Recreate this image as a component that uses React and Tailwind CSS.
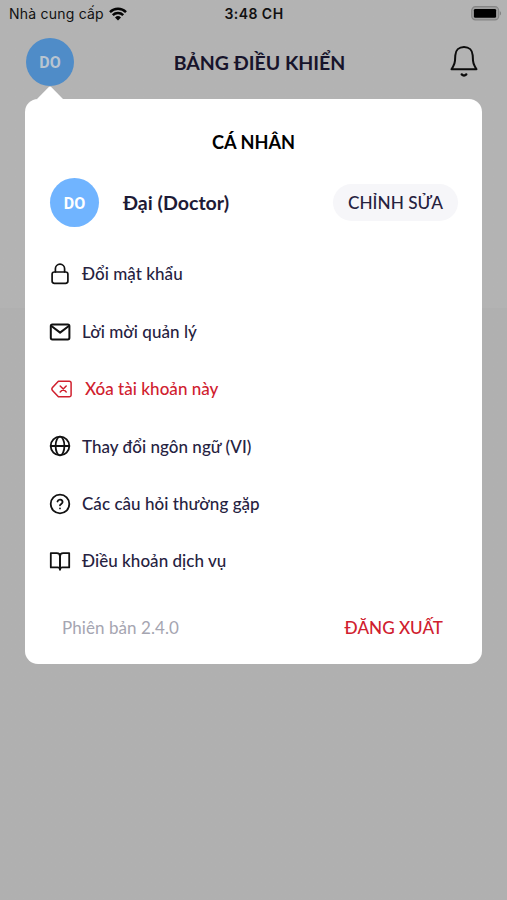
import React from 'react';

const strokeProps = {
  viewBox: '0 0 24 24',
  className: 'w-6 h-6',
  fill: 'none',
  stroke: 'currentColor',
  strokeWidth: 1.8,
  strokeLinecap: 'round',
  strokeLinejoin: 'round',
};

const LockIcon = () => (
  <svg {...strokeProps} strokeWidth="1.7">
    <rect x="4.1" y="10" width="15.8" height="11.4" rx="2.3" />
    <path d="M7.4 10V6.8a4.6 4.6 0 0 1 9.2 0V10" />
  </svg>
);

const MailIcon = () => (
  <svg {...strokeProps} strokeWidth="2">
    <rect x="2.8" y="4.4" width="18.6" height="15" rx="1.6" />
    <path d="m3.4 6 8.7 6.6L20.8 6" />
  </svg>
);

const DeleteTagIcon = () => (
  <svg viewBox="0 0 22 18" className="w-[22px] h-[18px]" fill="none" stroke="currentColor" strokeWidth="1.5" strokeLinecap="round" strokeLinejoin="round">
    <path d="M7.4 1.2H18.3a1.8 1.8 0 0 1 1.8 1.8V15a1.8 1.8 0 0 1-1.8 1.8H7.4L1.5 10.4a2.1 2.1 0 0 1 0-2.8Z" />
    <path d="m9.2 6 6 6M15.2 6l-6 6" />
  </svg>
);

const GlobeIcon = () => (
  <svg {...strokeProps}>
    <circle cx="12" cy="12" r="9.3" />
    <ellipse cx="12" cy="12" rx="4.4" ry="9.3" />
    <path d="M2.7 12h18.6" />
  </svg>
);

const HelpIcon = () => (
  <svg {...strokeProps}>
    <circle cx="12" cy="12" r="9.3" />
    <path d="M9.5 9.5a2.6 2.6 0 0 1 5.1.6c0 1.6-2.2 1.9-2.6 3.2" />
    <path d="M12 16.4v.01" />
  </svg>
);

const BookIcon = () => (
  <svg {...strokeProps}>
    <path d="M2.8 4.2h6A3.2 3.2 0 0 1 12 7.4v13.2a2.4 2.4 0 0 0-2.4-2.2H2.8Z" />
    <path d="M21.2 4.2h-6A3.2 3.2 0 0 0 12 7.4v13.2a2.4 2.4 0 0 1 2.4-2.2h6.8Z" />
  </svg>
);

const BellIcon = () => (
  <svg viewBox="0 0 30 32" className="w-[30px] h-8" fill="none" stroke="#0c0c0c" strokeWidth="2" strokeLinecap="round" strokeLinejoin="round">
    <path d="M6.3 10.4C6.5 5.3 10 2 15 2s8.5 3.3 8.7 8.4l.3 5.2c.2 2.6 1 4.4 2 6.1l1.5 2.5h-25L4 21.7c1-1.7 1.8-3.5 2-6.1Z" />
    <path d="M12.7 29.4c1.4 1.5 3.2 1.5 4.6 0" strokeWidth="2.3" />
  </svg>
);

const WifiIcon = () => (
  <svg viewBox="0 0 18 14" className="w-[18px] h-[14px]" fill="none" stroke="#050505" strokeWidth="2.5">
    <path d="M1 5.1a11.4 11.4 0 0 1 16 0" />
    <path d="M3.8 8.2a7.4 7.4 0 0 1 10.4 0" />
    <path d="M9 13.4 6 10.5a4.3 4.3 0 0 1 6 0Z" fill="#050505" stroke="none" />
  </svg>
);

const BatteryIcon = () => (
  <svg viewBox="0 0 31 15" className="w-[31px] h-[15px]">
    <rect x="0.7" y="0.7" width="27" height="13.2" rx="3.8" fill="#a0a0a0" stroke="#858585" strokeWidth="1.2" />
    <rect x="2.9" y="2.9" width="22.2" height="8.9" rx="1.4" fill="#000" />
    <path d="M28.8 5c1.7.8 1.7 3.8 0 4.6Z" fill="#808080" />
  </svg>
);

const menuItems = [
  { label: 'Đổi mật khẩu', icon: <LockIcon /> },
  { label: 'Lời mời quản lý', icon: <MailIcon /> },
  { label: 'Xóa tài khoản này', icon: <DeleteTagIcon />, danger: true },
  { label: 'Thay đổi ngôn ngữ (VI)', icon: <GlobeIcon /> },
  { label: 'Các câu hỏi thường gặp', icon: <HelpIcon /> },
  { label: 'Điều khoản dịch vụ', icon: <BookIcon /> },
];

function StatusBar() {
  return (
    <div className="h-7 pb-px pl-[9px] pr-[5px] grid grid-cols-3 items-center text-[#111] font-['Inter','Liberation_Sans',sans-serif]">
      <div className="flex items-center gap-[5px] whitespace-nowrap">
        <span className="text-[14px] tracking-[0.22px]">Nhà cung cấp</span>
        <WifiIcon />
      </div>
      <span className="pr-[3px] text-center text-[14px] font-semibold tracking-[0.45px]">3:48 CH</span>
      <div className="flex justify-end">
        <BatteryIcon />
      </div>
    </div>
  );
}

function MenuItem({ label, icon, danger }) {
  return (
    <button type="button" className={`h-[57.4px] flex items-center text-left ${danger ? 'text-[#d0202e]' : 'text-[#111]'}`}>
      <span className={`flex justify-center shrink-0 ${danger ? 'w-[26px] ml-[-1px] mr-[10px]' : 'w-6 mr-[10.5px] ml-[-2.5px]'}`}>{icon}</span>
      <span className={`text-[17px] font-medium tracking-[0.04px] ${danger ? 'text-[#d0202e]' : 'text-[#26223f]'}`}>{label}</span>
    </button>
  );
}

export default function App() {
  return (
    <div className="h-[900px] flex flex-col bg-linear-to-b from-[#b3b3b3] from-[308px] to-[#b0b0b0] to-[308px] font-['Lato','Noto_Sans',sans-serif] overflow-hidden">
      <StatusBar />

      <header className="h-[58px] pt-[10px] pl-[26px] pr-[28px] flex items-start justify-between">
        <div className="w-12 h-12 pt-[2px] rounded-full bg-[#4f8cc8] flex items-center justify-center text-[16px] font-bold text-[#b8c4d0] font-['Roboto','Noto_Sans',sans-serif]">DO</div>
        <h1 className="h-12 pt-px mr-1 flex items-center text-[19.5px] font-bold text-[#17142b]">BẢNG ĐIỀU KHIỂN</h1>
        <div className="pt-[7px]">
          <BellIcon />
        </div>
      </header>

      <svg viewBox="0 0 26 13" className="ml-[37px] w-[26px] h-[13px] shrink-0" fill="#fff">
        <path d="M0 13 11.8 1q1.2-1.2 2.4 0L26 13Z" />
      </svg>

      <main className="mx-[25px] h-[565px] shrink-0 rounded-[13px] bg-white px-[25px] flex flex-col">
        <h2 className="mt-[30px] leading-[26px] text-center text-[18.2px] font-bold text-black">CÁ NHÂN</h2>

        <div className="mt-[23px] flex items-center">
          <div className="w-[49px] h-[49px] pt-[2px] rounded-full bg-[#70b4ff] flex items-center justify-center text-[16px] font-bold text-white font-['Roboto','Noto_Sans',sans-serif]">DO</div>
          <span className="ml-6 text-[19.6px] font-bold text-[#1e1b36]">Đại (Doctor)</span>
          <button type="button" className="ml-auto w-[125px] h-[37px] mr-[-1px] rounded-full bg-[#f6f6f9] text-[17.2px] font-medium text-[#26223f]">CHỈNH SỬA</button>
        </div>

        <nav className="mt-[18.5px] flex flex-col">
          {menuItems.map((item) => (
            <MenuItem key={item.label} {...item} />
          ))}
        </nav>

        <div className="mt-[25.5px] pl-3 pr-[14px] flex items-center justify-between">
          <span className="text-[17px] tracking-[0.07px] text-[#a5a5b1]">Phiên bản 2.4.0</span>
          <button type="button" className="text-[17.1px] font-medium text-[#d0202e]">ĐĂNG XUẤT</button>
        </div>
      </main>
    </div>
  );
}
